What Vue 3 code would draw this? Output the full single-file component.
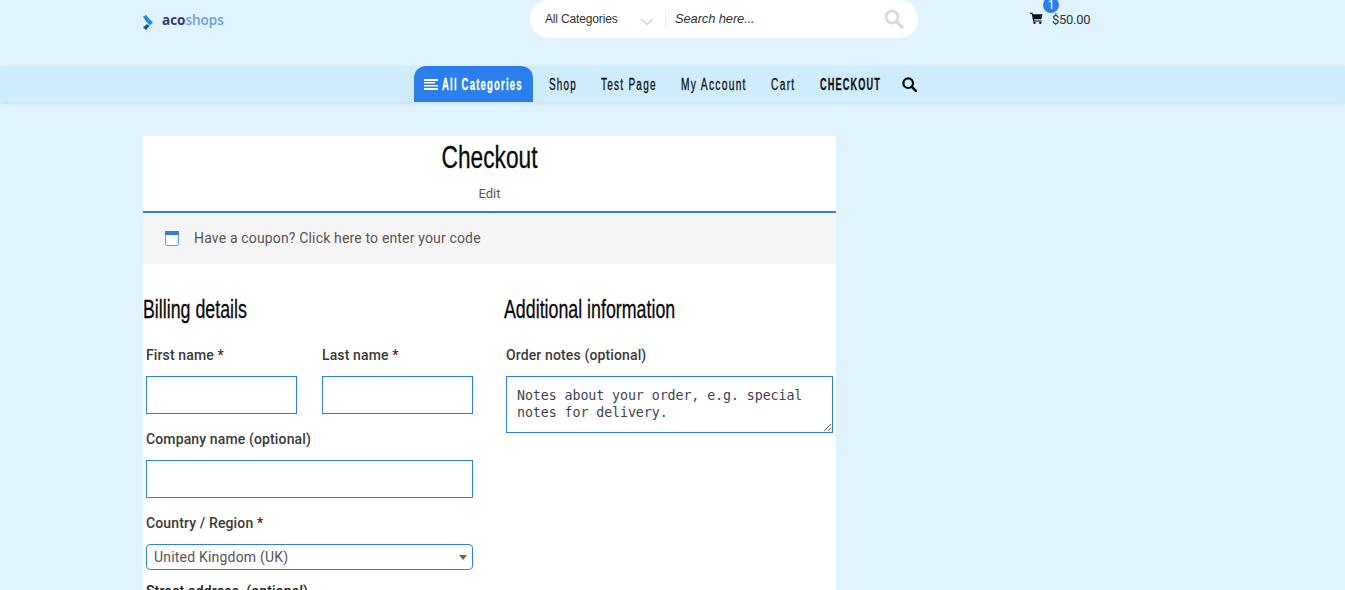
<script setup>
const navItems = [
  { label: 'Shop', width: 28, sx: 0.62 },
  { label: 'Test Page', width: 56, sx: 0.626 },
  { label: 'My Account', width: 66, sx: 0.64 },
  { label: 'Cart', width: 25, sx: 0.64 },
  { label: 'CHECKOUT', width: 61, sx: 0.572, active: true }
]
</script>

<template>
  <div class="page">
    <header class="top">
      <a class="logo">
        <svg width="11" height="15" viewBox="0 0 11 15"><path d="M0 1.500l3-1.500 3.500 4-3 3z" fill="#1f8fdc"/><path d="M3.500 7l3-3 3.500 3.500-3 3z" fill="#1f8fdc"/><path d="M0 12.500l4-3.500 2.500 2-3.500 4z" fill="#0f5a8f"/></svg>
        <span class="logo-text"><b>aco</b>shops</span>
      </a>
      <div class="search">
        <span class="cat">All Categories</span>
        <svg class="chev" width="14" height="8" viewBox="0 0 14 8"><path d="M1 1l6 5.500 6-5.500" fill="none" stroke="#d5d5d5" stroke-width="1.600"/></svg>
        <span class="sep"></span>
        <span class="ph">Search here...</span>
        <svg class="mag" width="20" height="20" viewBox="0 0 20 20"><circle cx="8" cy="8" r="6" fill="none" stroke="#dcdcdc" stroke-width="3"/><path d="M12.500 12.500l5.500 5.500" stroke="#dcdcdc" stroke-width="3.400" stroke-linecap="round"/></svg>
      </div>
      <div class="cart">
        <svg width="13" height="12" viewBox="0 0 13 12"><path d="M0 .8h2.500l.4 1.400h9.600l-1.200 5H4l.3 1.200h7.200v1.100H3.300L1.700 1.900H0z" fill="#111"/><circle cx="4.500" cy="10.700" r="1.200" fill="#111"/><circle cx="10.300" cy="10.700" r="1.200" fill="#111"/></svg>
        <span class="amount">$50.00</span>
        <span class="badge">1</span>
      </div>
    </header>

    <nav class="nav">
      <a class="cats">
        <svg width="14" height="11" viewBox="0 0 14 11"><path d="M0 0h14v2H0zM0 3h11v1.600H0zM0 6h14v1.600H0zM0 9h14v2H0z" fill="#fff"/></svg>
        <span class="squeeze cats-label">All Categories</span>
      </a>
      <a
        v-for="item in navItems"
        :key="item.label"
        class="item"
        :class="{ active: item.active }"
        :style="{ width: item.width + 'px' }"
      ><span class="squeeze" :style="{ transform: 'scaleX(' + item.sx + ')' }">{{ item.label }}</span></a>
      <svg class="nav-search" width="15" height="15" viewBox="0 0 15 15"><circle cx="6.200" cy="6.200" r="4.800" fill="none" stroke="#0c0c0c" stroke-width="2.200"/><path d="M9.800 9.800l4 4" stroke="#0c0c0c" stroke-width="2.600" stroke-linecap="round"/></svg>
    </nav>

    <main class="card">
      <div class="head">
        <h1>Checkout</h1>
        <a class="edit">Edit</a>
      </div>
      <div class="coupon">
        <svg width="14" height="15" viewBox="0 0 14 15"><rect x=".5" y=".5" width="13" height="14" rx="1" fill="#fff" stroke="#5c9df0"/><rect width="14" height="4" fill="#2b7fec"/></svg>
        <span>Have a coupon? Click here to enter your code</span>
      </div>
      <div class="cols">
        <section class="billing">
          <h2>Billing details</h2>
          <div class="fields">
            <div class="row two">
              <label class="field"><span class="lbl">First name <i>*</i></span><input type="text" /></label>
              <label class="field"><span class="lbl">Last name <i>*</i></span><input type="text" /></label>
            </div>
            <label class="field"><span class="lbl">Company name (optional)</span><input type="text" /></label>
            <label class="field country">
              <span class="lbl">Country / Region <i>*</i></span>
              <span class="select">United Kingdom (UK)<span class="arrow"></span></span>
            </label>
            <span class="lbl street">Street address&nbsp; (optional)</span>
          </div>
        </section>
        <section class="additional">
          <h2>Additional information</h2>
          <div class="fields">
            <label class="field">
              <span class="lbl">Order notes (optional)</span>
              <textarea placeholder="Notes about your order, e.g. special notes for delivery."></textarea>
            </label>
          </div>
        </section>
      </div>
    </main>
  </div>
</template>

<style>
html, body { margin: 0; padding: 0; background: #e0f3fe; overflow: hidden; }
</style>

<style scoped>
.page {
  height: 590px;
  overflow: hidden;
  background: #e0f3fe;
  font-family: Roboto, sans-serif;
  color: #333;
}
.top {
  height: 66px;
  padding-left: 143px;
  display: flex;
  align-items: flex-start;
  box-sizing: border-box;
}
.logo {
  width: 387px;
  height: 40px;
  display: flex;
  align-items: center;
  gap: 8px;
  padding-top: 4px;
  box-sizing: border-box;
}
.logo-text {
  font-family: "Open Sans", sans-serif;
  font-size: 13.500px;
  font-weight: 600;
  color: #6a9fd8;
  margin-top: -4px;
}
.logo-text b { color: #2f3a66; font-weight: 700; }
.search {
  width: 388px;
  height: 38px;
  background: #fff;
  border-radius: 19px;
  display: flex;
  align-items: center;
  padding: 0 14px 0 15px;
  box-sizing: border-box;
  font-family: "Liberation Sans", sans-serif;
  font-size: 12px;
}
.cat { width: 95px; color: #333; letter-spacing: -.15px; }
.chev { margin-top: 5px; }
.sep { width: 1px; height: 18px; background: #eee; margin: 0 9px 0 11px; }
.ph { flex: 1; font-style: italic; font-size: 13px; color: #333; letter-spacing: -.15px; margin-top: -1px; }
.cart {
  margin-left: 112px;
  position: relative;
  display: flex;
  align-items: center;
  height: 38px;
  gap: 9px;
  font-size: 13px;
  color: #333;
}
.cart svg { margin-top: -2px; }
.amount { letter-spacing: -.3px; }
.badge {
  position: absolute;
  left: 13px;
  top: -3px;
  width: 16px;
  height: 16px;
  border-radius: 50%;
  background: #2b7fec;
  color: #fff;
  font-size: 12px;
  line-height: 16px;
  text-align: center;
}
.nav {
  height: 36px;
  background: #cfedfd;
  box-shadow: 0 2px 4px rgba(0, 0, 0, .08);
  display: flex;
  align-items: center;
  padding-left: 414px;
  font-family: "Liberation Sans", sans-serif;
  font-size: 16px;
  letter-spacing: 2px;
  color: #111;
}
.squeeze {
  display: inline-block;
  transform-origin: left center;
  white-space: nowrap;
  margin-top: 2px;
  -webkit-text-stroke: .3px currentColor;
}
.cats {
  height: 36px;
  width: 119px;
  flex: none;
  box-sizing: border-box;
  background: #2b7fec;
  border-radius: 12px 12px 0 0;
  color: #fff;
  font-weight: 700;
  display: flex;
  align-items: center;
  gap: 4px;
  padding-left: 10px;
  margin-right: 16px;
}
.cats svg { flex: none; }
.cats-label { transform: scaleX(.596); width: 81px; }
.item { margin-right: 24px; flex: none; display: block; }
.item.active { font-weight: 700; margin-right: 21px; }
.nav-search { display: block; flex: none; }
.card {
  margin: 34px 0 0 143px;
  width: 693px;
  background: #fff;
  height: 500px;
}
.head {
  height: 77px;
  box-sizing: border-box;
  border-bottom: 2px solid #2b7fec;
  text-align: center;
}
h1, h2 {
  margin: 0;
  font-family: "Liberation Sans", sans-serif;
  font-weight: 400;
  color: #0a0a0a;
  -webkit-text-stroke: .3px currentColor;
}
h1 { font-size: 32px; line-height: 42px; transform: scaleX(.71); }
.edit { display: block; font-size: 13px; line-height: 16px; margin-top: 8px; color: #555; }
.coupon {
  height: 51px;
  background: #f5f5f5;
  display: flex;
  align-items: center;
  gap: 15px;
  padding-left: 22px;
  font-size: 14px;
  color: #555;
  letter-spacing: .16px;
}
.coupon span { margin-top: -2px; }
.coupon svg { margin-top: -1px; }
.cols { display: flex; }
.billing { width: 361px; }
.additional { width: 332px; }
h2 { font-size: 25px; line-height: 30px; margin-top: 30px; transform: scaleX(.712); transform-origin: left center; white-space: nowrap; }
.fields { padding: 0 3px; margin-top: 23px; display: flex; flex-direction: column; gap: 17px; }
.additional .fields { padding-left: 2px; }
.row.two { display: grid; grid-template-columns: 151px 151px; column-gap: 25px; width: 327px; }
.field { display: flex; flex-direction: column; width: 327px; }
.row.two .field { width: 151px; }
.lbl { font-size: 14px; line-height: 16px; font-weight: 500; color: #3a3a3a; margin-bottom: 13px; display: block; letter-spacing: .13px; }
.lbl i { font-style: normal; color: #7a1500; }
input {
  height: 38px;
  box-sizing: border-box;
  border: 1px solid #2b7fec;
  border-radius: 0;
  background: #fff;
  width: 100%;
  padding: 0;
  outline: none;
}
.select {
  position: relative;
  display: block;
  height: 26px;
  box-sizing: border-box;
  border: 1px solid #2b7fec;
  border-radius: 4px;
  padding-left: 7px;
  font-size: 14px;
  line-height: 24px;
  color: #555;
  letter-spacing: .2px;
}
.arrow {
  position: absolute;
  right: 5px;
  top: 10px;
  width: 0;
  height: 0;
  border-left: 4px solid transparent;
  border-right: 4px solid transparent;
  border-top: 5px solid #7a5a5a;
}
.street { margin-top: -4px; color: #222; }
textarea {
  display: block;
  height: 57px;
  width: 100%;
  box-sizing: border-box;
  border: 1px solid #2b7fec;
  border-radius: 0;
  padding: 10px 10px;
  font-family: "DejaVu Sans Mono", monospace;
  font-size: 13.330px;
  letter-spacing: -.1px;
  line-height: 17px;
  outline: none;
  background: #fff;
}
textarea::placeholder { color: #3f4450; opacity: 1; }
</style>
